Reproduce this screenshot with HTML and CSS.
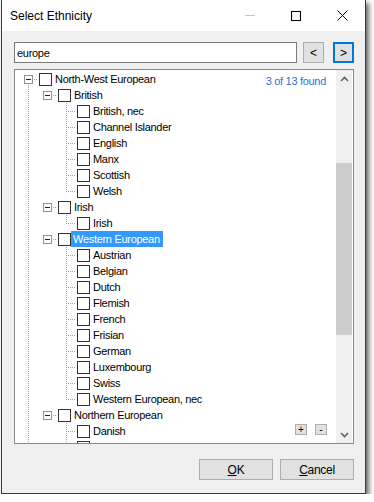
FILE: index.html
```html
<!DOCTYPE html>
<html lang="en">
<head>
	<meta charset="utf-8">
	<title>Select Ethnicity</title>
	<link rel="stylesheet" href="styles.css">
</head>
<body>
	<div class="window">
		<div class="titlebar">
			<span class="title">Select Ethnicity</span>
			<div class="caption">
				<span class="cap-btn"><svg width="10" height="1"><rect width="10" height="1" fill="#c4c4c4"/></svg></span>
				<span class="cap-btn"><svg width="10" height="10"><rect x=".5" y=".5" width="9" height="9" fill="none" stroke="#000"/></svg></span>
				<span class="cap-btn"><svg width="11" height="11"><path d="M.5 .5L10.5 10.5M10.5 .5L.5 10.5" stroke="#000" stroke-width="1"/></svg></span>
			</div>
		</div>
		<div class="client">
			<div class="search">
				<input class="search-box" type="text" value="europe">
				<button class="nav">&lt;</button>
				<button class="nav focused">&gt;</button>
			</div>
			<div class="panel">
				<div class="tree">
					<div class="row"><i class="c exp root"><svg width="9" height="9"><rect x=".5" y=".5" width="8" height="8" fill="#fff" stroke="#919191"/><path d="M2 4.5h5" stroke="#222"/></svg></i><span class="cb"></span><span class="lbl">North-West European</span></div>
					<div class="row"><i class="c v"></i><i class="c exp"><svg width="9" height="9"><rect x=".5" y=".5" width="8" height="8" fill="#fff" stroke="#919191"/><path d="M2 4.5h5" stroke="#222"/></svg></i><span class="cb"></span><span class="lbl">British</span></div>
					<div class="row"><i class="c v"></i><i class="c"></i><i class="c tee"></i><span class="cb"></span><span class="lbl">British, nec</span></div>
					<div class="row"><i class="c v"></i><i class="c"></i><i class="c tee"></i><span class="cb"></span><span class="lbl">Channel Islander</span></div>
					<div class="row"><i class="c v"></i><i class="c"></i><i class="c tee"></i><span class="cb"></span><span class="lbl">English</span></div>
					<div class="row"><i class="c v"></i><i class="c"></i><i class="c tee"></i><span class="cb"></span><span class="lbl">Manx</span></div>
					<div class="row"><i class="c v"></i><i class="c"></i><i class="c tee"></i><span class="cb"></span><span class="lbl">Scottish</span></div>
					<div class="row"><i class="c v"></i><i class="c"></i><i class="c elbow"></i><span class="cb"></span><span class="lbl">Welsh</span></div>
					<div class="row"><i class="c v"></i><i class="c exp"><svg width="9" height="9"><rect x=".5" y=".5" width="8" height="8" fill="#fff" stroke="#919191"/><path d="M2 4.5h5" stroke="#222"/></svg></i><span class="cb"></span><span class="lbl">Irish</span></div>
					<div class="row"><i class="c v"></i><i class="c"></i><i class="c elbow"></i><span class="cb"></span><span class="lbl">Irish</span></div>
					<div class="row"><i class="c v"></i><i class="c exp"><svg width="9" height="9"><rect x=".5" y=".5" width="8" height="8" fill="#fff" stroke="#919191"/><path d="M2 4.5h5" stroke="#222"/></svg></i><span class="cb"></span><span class="lbl selected">Western European</span></div>
					<div class="row"><i class="c v"></i><i class="c"></i><i class="c tee"></i><span class="cb"></span><span class="lbl">Austrian</span></div>
					<div class="row"><i class="c v"></i><i class="c"></i><i class="c tee"></i><span class="cb"></span><span class="lbl">Belgian</span></div>
					<div class="row"><i class="c v"></i><i class="c"></i><i class="c tee"></i><span class="cb"></span><span class="lbl">Dutch</span></div>
					<div class="row"><i class="c v"></i><i class="c"></i><i class="c tee"></i><span class="cb"></span><span class="lbl">Flemish</span></div>
					<div class="row"><i class="c v"></i><i class="c"></i><i class="c tee"></i><span class="cb"></span><span class="lbl">French</span></div>
					<div class="row"><i class="c v"></i><i class="c"></i><i class="c tee"></i><span class="cb"></span><span class="lbl">Frisian</span></div>
					<div class="row"><i class="c v"></i><i class="c"></i><i class="c tee"></i><span class="cb"></span><span class="lbl">German</span></div>
					<div class="row"><i class="c v"></i><i class="c"></i><i class="c tee"></i><span class="cb"></span><span class="lbl">Luxembourg</span></div>
					<div class="row"><i class="c v"></i><i class="c"></i><i class="c tee"></i><span class="cb"></span><span class="lbl">Swiss</span></div>
					<div class="row"><i class="c v"></i><i class="c"></i><i class="c elbow"></i><span class="cb"></span><span class="lbl">Western European, nec</span></div>
					<div class="row"><i class="c v"></i><i class="c exp"><svg width="9" height="9"><rect x=".5" y=".5" width="8" height="8" fill="#fff" stroke="#919191"/><path d="M2 4.5h5" stroke="#222"/></svg></i><span class="cb"></span><span class="lbl">Northern European</span></div>
					<div class="row"><i class="c v"></i><i class="c"></i><i class="c tee"></i><span class="cb"></span><span class="lbl">Danish</span></div>
					<div class="row"><i class="c v"></i><i class="c"></i><i class="c tee"></i><span class="cb"></span></div>
				</div>
				<div class="scrollbar">
					<div class="arrow"><svg width="9" height="6"><path d="M1 5L4.5 1.5L8 5" fill="none" stroke="#606060" stroke-width="1.6"/></svg></div>
					<div class="track"><div class="thumb"></div></div>
					<div class="arrow"><svg width="9" height="6"><path d="M1 1L4.5 4.5L8 1" fill="none" stroke="#606060" stroke-width="1.6"/></svg></div>
				</div>
				<span class="found">3 of 13 found</span>
				<div class="zoom">
					<button class="mini">+</button>
					<button class="mini">-</button>
				</div>
			</div>
			<div class="footer">
				<button class="btn"><u>O</u>K</button>
				<button class="btn"><u>C</u>ancel</button>
			</div>
		</div>
	</div>
</body>
</html>
```

FILE: styles.css
```css
* {
	box-sizing: border-box;
}
body {
	margin: 0;
	background-color: #fff;
	font-family: "Liberation Sans", Arial, sans-serif;
}
.window {
	width: 365px;
	height: 494px;
	margin-left: 1px;
	border: 1px solid #3a3a3a;
	border-top: none;
	background-color: #f0f0f0;
	box-shadow: 3px 3px 5px rgba(0, 0, 0, 0.6);
	display: flex;
	flex-direction: column;
}
.titlebar {
	height: 31px;
	background-color: #fff;
	display: flex;
	align-items: center;
	flex: none;
}
.title {
	flex: 1;
	padding-left: 8px;
	font-size: 12px;
	color: #000;
}
.caption {
	display: flex;
}
.cap-btn {
	width: 46px;
	height: 31px;
	display: flex;
	align-items: center;
	justify-content: center;
}
.cap-btn svg {
	display: block;
}
.client {
	flex: 1;
	padding: 11px 11px 0 12px;
	font-size: 11px;
	letter-spacing: -0.3px;
}
.search {
	display: flex;
	height: 21px;
}
.search-box {
	width: 283px;
	height: 21px;
	margin: 0;
	padding: 0 2px;
	border: 1px solid #7a7a7a;
	background-color: #fff;
	font: inherit;
	letter-spacing: inherit;
	color: #000;
	outline: none;
}
.nav {
	width: 21px;
	height: 21px;
	margin: 0 0 0 6px;
	padding: 0;
	border: 1px solid #adadad;
	background-color: #e1e1e1;
	font-family: inherit;
	font-size: 12px;
	color: #000;
}
.nav.focused {
	margin-left: 9px;
	border: 2px solid #0078d7;
}
.panel {
	position: relative;
	margin-top: 6px;
	height: 375px;
	border: 1px solid #828790;
	background-color: #fff;
	display: flex;
}
.tree {
	flex: 1;
	overflow: hidden;
	padding: 1px 0 0 4px;
}
.row {
	display: flex;
	align-items: flex-start;
	height: 16px;
}
.c {
	display: block;
	flex: none;
	width: 19px;
	height: 16px;
	background-repeat: no-repeat;
}
.v {
	background-image: repeating-linear-gradient(to bottom, #a0a0a0 0 1px, transparent 1px 2px);
	background-size: 1px 16px;
	background-position: 9px 0;
}
.tee,
.elbow {
	background-image: repeating-linear-gradient(to bottom, #a0a0a0 0 1px, transparent 1px 2px),
		repeating-linear-gradient(to right, transparent 0 1px, #a0a0a0 1px 2px);
	background-size: 1px 16px, 9px 1px;
	background-position: 9px 0, 10px 8px;
}
.elbow {
	background-size: 1px 9px, 9px 1px;
}
.exp {
	padding: 4px 0 0 5px;
	background-image: repeating-linear-gradient(to right, transparent 0 1px, #a0a0a0 1px 2px);
	background-size: 5px 1px;
	background-position: 14px 8px;
}
.exp.root {
	background-image: repeating-linear-gradient(to right, transparent 0 1px, #a0a0a0 1px 2px),
		repeating-linear-gradient(to bottom, transparent 0 1px, #a0a0a0 1px 2px);
	background-size: 5px 1px, 1px 3px;
	background-position: 14px 8px, 9px 13px;
}
.exp svg {
	display: block;
}
.cb {
	flex: none;
	width: 13px;
	height: 13px;
	margin: 2px 0 0 1px;
	border: 1px solid #333;
	background-color: #fff;
}
.lbl {
	height: 16px;
	line-height: 16px;
	padding: 0 3px;
	white-space: nowrap;
	color: #000;
}
.lbl.selected {
	padding-left: 2px;
	background-color: #3399ff;
	color: #fff;
}
.scrollbar {
	flex: none;
	width: 16px;
	margin-right: 1px;
	background-color: #f0f0f0;
	display: flex;
	flex-direction: column;
}
.arrow {
	height: 17px;
	display: flex;
	align-items: center;
	justify-content: center;
}
.arrow svg {
	display: block;
}
.track {
	flex: 1;
	padding-top: 76px;
}
.thumb {
	height: 172px;
	background-color: #cdcdcd;
}
.found {
	position: absolute;
	top: 5px;
	right: 27px;
	line-height: 13px;
	color: #2b74d9;
}
.zoom {
	position: absolute;
	right: 26px;
	bottom: 8px;
	display: flex;
	gap: 8px;
}
.mini {
	width: 12px;
	height: 11px;
	padding: 0;
	border: 1px solid #adadad;
	background-color: #e1e1e1;
	font-family: inherit;
	font-size: 10px;
	line-height: 8px;
	color: #000;
}
.footer {
	display: flex;
	justify-content: flex-end;
	gap: 7px;
	margin-top: 15px;
}
.btn {
	width: 74px;
	height: 21px;
	padding: 0;
	border: 1px solid #adadad;
	background-color: #e1e1e1;
	font-family: inherit;
	font-size: 12px;
	letter-spacing: -0.3px;
	color: #000;
}
```
